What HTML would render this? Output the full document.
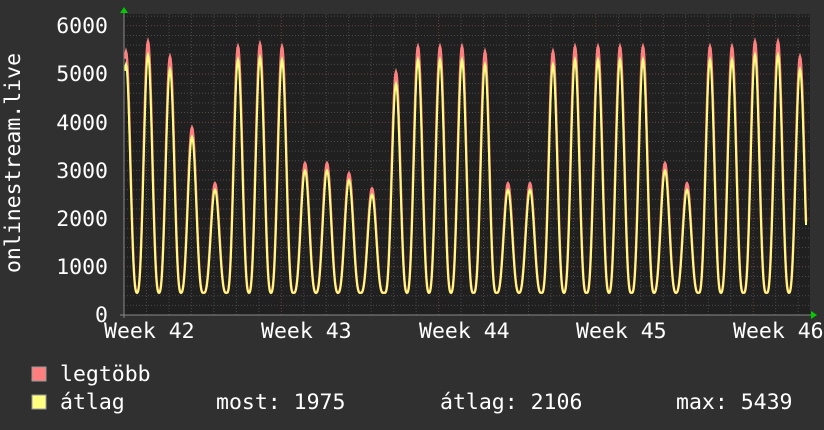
<!DOCTYPE html>
<html><head><meta charset="utf-8"><style>
html,body{margin:0;padding:0;background:#303030;}
svg{display:block;}
text{font-family:"DejaVu Sans Mono","Liberation Mono",monospace;fill:#fff;font-size:21.5px;}
</style></head><body>
<svg id="g" width="824" height="430" xmlns="http://www.w3.org/2000/svg">
<rect width="824" height="430" fill="#303030"/>
<rect x="124" y="14" width="686" height="301" fill="#202020"/>
<g id="grid"></g>
<g id="data"></g>
<line x1="120" y1="315" x2="812" y2="315" stroke="#888" stroke-width="1"/>
<line x1="124" y1="12" x2="124" y2="318" stroke="#888" stroke-width="1"/>
<polygon points="120,13 128,13 124,7" fill="#00cc00"/>
<polygon points="811,311 811,319 817,315" fill="#00cc00"/>
<g text-anchor="end">
<text x="108" y="33">6000</text>
<text x="108" y="81">5000</text>
<text x="108" y="130">4000</text>
<text x="108" y="178">3000</text>
<text x="108" y="226">2000</text>
<text x="108" y="274">1000</text>
<text x="108" y="322">0</text>
</g>
<text x="104" y="338">Week 42</text>
<text x="261" y="338">Week 43</text>
<text x="419" y="338">Week 44</text>
<text x="576" y="338">Week 45</text>
<text x="733" y="338">Week 46</text>
<text transform="translate(20,163) rotate(-90)" text-anchor="middle">onlinestream.live</text>
<rect x="32" y="367" width="14" height="14" fill="#ff7f7f" stroke="#999" stroke-width="1"/>
<rect x="32" y="395" width="14" height="14" fill="#ffff7f" stroke="#999" stroke-width="1"/>
<text x="60" y="381">legtöbb</text>
<text x="60" y="409">átlag</text>
<text x="216" y="409">most: 1975</text>
<text x="440" y="409">átlag: 2106</text>
<text x="676" y="409">max: 5439</text>
</svg>
<script>
(function(){
var NS="http://www.w3.org/2000/svg";
var grid=document.getElementById('grid'),data=document.getElementById('data');
function ln(x1,y1,x2,y2,c){var l=document.createElementNS(NS,'line');l.setAttribute('x1',x1);l.setAttribute('y1',y1);l.setAttribute('x2',x2);l.setAttribute('y2',y2);l.setAttribute('stroke',c);l.setAttribute('stroke-dasharray','1,2');grid.appendChild(l);}
var y0=315,k=48.2;
for(var v=200;v<=6200;v+=200){var y=y0-v*k/1000;if(y<14)break;ln(124,y,810,y,v%1000==0?'#6a4040':'#4a4a4a');}
var day=157.3/7;
for(var d=1;d<31;d++){var x=124+d*day;ln(x,14,x,315,d%7==0?'#6a4040':'#4a4a4a');}
var peaks=[5200,5400,5100,3700,2600,5300,5350,5300,3000,3000,2800,2500,4800,5300,5300,5300,5200,2600,2600,5200,5300,5300,5300,5300,3000,2600,5300,5300,5400,5400,5100];
var centers=[126,148,170,192,215,238,260,282,305,327,349,372,396,418,440,462,485,508,530,553,575,598,620,643,665,687,710,732,755,778,800];
function val(x,scale){var best=460;for(var i=0;i<centers.length;i++){var dx=x-centers[i];if(Math.abs(dx)<11.3){var p=peaks[i]*scale;var t=Math.cos(dx/11.3*Math.PI/2);t=Math.pow(t,3);var v=460+(p-460)*t;if(v>best)best=v;}}return best;}
function path(scale,color,w){var pts=[];for(var x=125;x<=806;x+=0.5){var v=val(x,scale);pts.push(x.toFixed(1)+','+(y0-v*k/1000).toFixed(1));}pts.push('806,'+(y0-1975*k/1000).toFixed(1));var p=document.createElementNS(NS,'polyline');p.setAttribute('points',pts.join(' '));p.setAttribute('fill','none');p.setAttribute('stroke',color);p.setAttribute('stroke-width',w);data.appendChild(p);}
path(1.05,'#ff7f7f',2.5);
path(1.0,'#ffff7f',2);
})();
</script>
</body></html>
